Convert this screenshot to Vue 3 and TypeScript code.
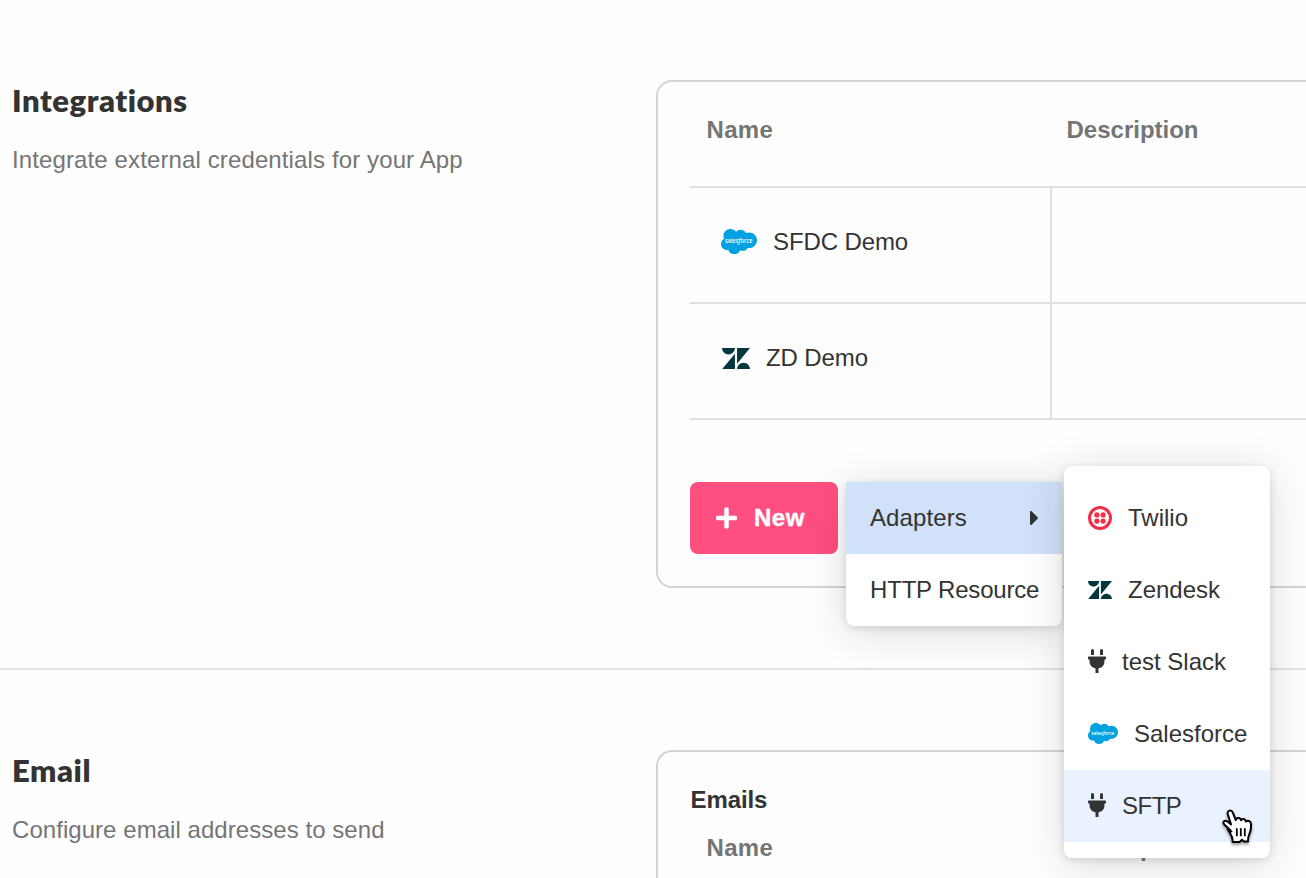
<script setup lang="ts">
type IconName = 'twilio' | 'zendesk' | 'plug' | 'salesforce'

interface Integration {
  name: string
  icon: IconName
  description: string
}

interface Adapter {
  label: string
  icon: IconName
  hovered?: boolean
}

const viewBoxes: Record<IconName, string> = {
  twilio: '0 0 24 24',
  zendesk: '0 2.9 24 18.2',
  plug: '0 0 384 512',
  salesforce: '0 3.6 24 16.8',
}

const shapes: Record<IconName, string> = {
  twilio:
    'M12 0a12 12 0 100 24 12 12 0 000-24zm0 3.1a8.9 8.9 0 110 17.8 8.9 8.9 0 010-17.8zM8.9 6.3a2.6 2.6 0 100 5.2 2.6 2.6 0 000-5.2zm6.2 0a2.6 2.6 0 100 5.2 2.6 2.6 0 000-5.2zm-6.2 6.2a2.6 2.6 0 100 5.2 2.6 2.6 0 000-5.2zm6.2 0a2.6 2.6 0 100 5.2 2.6 2.6 0 000-5.2z',
  zendesk:
    'M12.914 2.904V16.29L24 2.905H12.914zM0 2.906C0 5.966 2.483 8.45 5.543 8.45s5.542-2.484 5.543-5.544H0zm11.086 4.807L0 21.096h11.086V7.713zm7.37 7.84c-3.063 0-5.542 2.48-5.542 5.543H24c0-3.06-2.48-5.543-5.543-5.543z',
  plug: 'M320,32a32,32,0,0,0-64,0v96h64Zm48,128H16A16,16,0,0,0,0,176v32a16,16,0,0,0,16,16H32v32A160.07,160.07,0,0,0,160,412.8V512h64V412.8A160.07,160.07,0,0,0,352,256V224h16a16,16,0,0,0,16-16V176A16,16,0,0,0,368,160ZM128,32a32,32,0,0,0-64,0v96h64Z',
  salesforce:
    'M10.006 5.415a4.195 4.195 0 013.045-1.306c1.56 0 2.954.9 3.69 2.205.63-.3 1.35-.45 2.1-.45 2.85 0 5.159 2.34 5.159 5.22s-2.31 5.22-5.176 5.22c-.345 0-.69-.044-1.02-.104a3.75 3.75 0 01-3.3 1.95c-.6 0-1.155-.15-1.65-.375A4.314 4.314 0 018.88 20.4a4.302 4.302 0 01-4.05-2.82c-.27.062-.54.076-.825.076-2.204 0-4.005-1.8-4.005-4.05 0-1.5.811-2.805 2.01-3.51-.255-.57-.39-1.2-.39-1.846 0-2.58 2.1-4.65 4.65-4.65 1.53 0 2.85.705 3.72 1.8',
}

const integrations: Integration[] = [
  { name: 'SFDC Demo', icon: 'salesforce', description: '' },
  { name: 'ZD Demo', icon: 'zendesk', description: '' },
]

const adapters: Adapter[] = [
  { label: 'Twilio', icon: 'twilio' },
  { label: 'Zendesk', icon: 'zendesk' },
  { label: 'test Slack', icon: 'plug' },
  { label: 'Salesforce', icon: 'salesforce' },
  { label: 'SFTP', icon: 'plug', hovered: true },
]
</script>

<template>
  <main class="page">
    <section class="section">
      <header class="intro">
        <h2>Integrations</h2>
        <p>Integrate external credentials for your App</p>
      </header>
      <div class="card">
        <div class="row head">
          <div class="cell">Name</div>
          <div class="cell">Description</div>
        </div>
        <div v-for="item in integrations" :key="item.name" class="row body">
          <div class="cell name">
            <svg :class="['icon', item.icon]" :viewBox="viewBoxes[item.icon]">
              <path :d="shapes[item.icon]" />
              <text v-if="item.icon === 'salesforce'" x="2.6" y="13.2" textLength="18.4" lengthAdjust="spacingAndGlyphs">sales<tspan font-style="italic">f</tspan>orce</text>
            </svg>
            <span>{{ item.name }}</span>
          </div>
          <div class="cell">{{ item.description }}</div>
        </div>
        <div class="actions">
          <button class="new" type="button">
            <svg class="plus" viewBox="0 0 448 512">
              <path
                fill="#fff"
                d="M416 208H272V64c0-17.67-14.33-32-32-32h-32c-17.67 0-32 14.33-32 32v144H32c-17.67 0-32 14.33-32 32v32c0 17.67 14.33 32 32 32h144v144c0 17.67 14.33 32 32 32h32c17.67 0 32-14.33 32-32V304h144c17.67 0 32-14.33 32-32v-32c0-17.67-14.33-32-32-32z"
              />
            </svg>
            <span>New</span>
          </button>
          <div class="menu">
            <div class="item active">
              <span>Adapters</span>
              <svg class="caret" viewBox="0 0 192 512">
                <path
                  fill="#333"
                  d="M0 384.662V127.338c0-17.818 21.543-26.741 34.142-14.142l128.656 128.656c7.81 7.81 7.81 20.474 0 28.284L34.142 398.804C21.543 411.404 0 402.48 0 384.662z"
                />
              </svg>
            </div>
            <div class="item resource">HTTP Resource</div>
            <div class="submenu">
              <div
                v-for="adapter in adapters"
                :key="adapter.label"
                :class="['item', { hovered: adapter.hovered }]"
              >
                <svg :class="['icon', adapter.icon]" :viewBox="viewBoxes[adapter.icon]">
                  <path :d="shapes[adapter.icon]" fill-rule="evenodd" />
                  <text v-if="adapter.icon === 'salesforce'" x="2.6" y="13.2" textLength="18.4" lengthAdjust="spacingAndGlyphs">sales<tspan font-style="italic">f</tspan>orce</text>
                </svg>
                <span>{{ adapter.label }}</span>
                <svg v-if="adapter.hovered" class="pointer" viewBox="0 0 34 38">
                  <path
                    fill="#fff"
                    stroke="#000"
                    stroke-width="2"
                    stroke-linejoin="round"
                    d="M11.8 24.2 C9.5 20.8 6.2 18.6 4.2 16.4 C2.2 13.8 4.6 11.7 7.3 13.3 L11 16.4 L7.8 6.2 C6.8 2.4 11.4 1 12.8 4.6 L15.8 12 C16.4 9.4 20.4 9.4 21 12.2 C22 10.2 25.4 10.6 25.8 13.4 C27.6 11.8 30.8 13 31 16 C31.2 20 30.8 23.6 29.2 26.4 C28.2 28.4 28 29.6 28 33.6 L24 33.6 L22 31.8 L19.6 34 L12.6 34 C12.8 30.8 12.4 28.4 10.2 25.6 L7 20"
                  />
                  <path stroke="#000" stroke-width="1.8" d="M16.8 20.2v8M20.8 20.2v8M24.8 20.2v8" />
                </svg>
              </div>
            </div>
          </div>
        </div>
      </div>
    </section>

    <section class="section">
      <header class="intro">
        <h2>Email</h2>
        <p class="tight">Configure email addresses to send</p>
      </header>
      <div class="card">
        <h3>Emails</h3>
        <div class="row head">
          <div class="cell">Name</div>
          <div class="cell">Description</div>
        </div>
      </div>
    </section>
  </main>
</template>

<style>
html,
body {
  overflow: hidden;
  background: #fefefe;
}
</style>

<style scoped>
.page {
  box-sizing: border-box;
  width: 1306px;
  height: 878px;
  overflow: hidden;
  font: 24px/36px 'Liberation Sans', Arial, sans-serif;
  color: #333;
}
.section {
  display: grid;
  grid-template-columns: 644px 900px;
  padding: 80px 0 80px 12px;
  border-bottom: 2px solid #e2e2e2;
}
h2 {
  margin: -2px 0 0;
  font: 800 31px/44px Lato, sans-serif;
  letter-spacing: 0.55px;
}
.intro p {
  margin: 20px 0 0;
  color: #757575;
  letter-spacing: 0.12px;
}
.intro p.tight {
  letter-spacing: 0.05px;
}
.card {
  box-sizing: border-box;
  padding: 32px;
  border: 2px solid #d3d3d3;
  border-radius: 16px;
}
h3 {
  margin: -2px 0 0;
  font-size: 24px;
  line-height: 36px;
  letter-spacing: -0.1px;
  text-indent: 0.5px;
}
.row {
  display: grid;
  grid-template-columns: 362px 1fr;
  border-bottom: 2px solid #e0e0e0;
}
.head {
  height: 72px;
  font-weight: bold;
  color: #757575;
}
.head .cell {
  padding: 0 16.5px;
  margin-top: -2px;
  letter-spacing: 0.3px;
}
.head .cell + .cell {
  padding-left: 14.5px;
  letter-spacing: 0;
}
h3 + .head {
  margin-top: 14px;
}
.body {
  height: 114px;
}
.body .cell:first-child {
  border-right: 2px solid #e0e0e0;
}
.name {
  display: flex;
  align-items: center;
  gap: 16px;
  padding: 0 32px 6px;
}
.body .name span {
  letter-spacing: -0.1px;
}
.icon {
  flex: none;
  width: 24px;
  height: 24px;
}
.icon text {
  font: 600 4.1px 'Open Sans', sans-serif;
  fill: #fff;
}
.icon.twilio {
  fill: #f22f46;
}
.icon.zendesk {
  height: 18.2px;
  fill: #03363d;
}
.icon.plug {
  width: 18px;
  margin-top: -2px;
  fill: #333;
}
.icon.salesforce {
  width: 30px;
  height: 21px;
  margin-top: -2px;
  fill: #00a1e0;
}
.name .icon.zendesk {
  width: 28px;
  height: 21.3px;
  margin-top: 1px;
}
.name .icon.salesforce {
  width: 36px;
  height: 25.2px;
  margin: -1px 0 0 -1px;
}
.actions {
  display: flex;
  gap: 8px;
  height: 72px;
  padding-top: 62px;
}
.new {
  display: flex;
  align-items: center;
  gap: 17px;
  box-sizing: border-box;
  width: 148px;
  height: 72px;
  padding: 0 0 0 26px;
  border: 0;
  border-radius: 8px;
  background: #ff4f81;
  color: #fff;
  font: bold 24px/36px 'Liberation Sans', Arial, sans-serif;
  letter-spacing: 0.5px;
}
.new span {
  -webkit-text-stroke: 0.4px #fff;
}
.plus {
  width: 21px;
  height: 24px;
  margin-top: -1px;
}
.menu,
.submenu {
  background: #fff;
  box-shadow: 0 2px 8px rgba(0, 0, 0, 0.12), 0 6px 44px rgba(0, 0, 0, 0.14);
}
.menu {
  position: relative;
  z-index: 1;
  width: 216px;
  height: 144px;
  border-radius: 0 0 8px 8px;
}
.submenu {
  position: absolute;
  top: -16px;
  left: 218px;
  width: 206px;
  padding: 16px 0;
  border-radius: 8px;
}
.item {
  position: relative;
  display: flex;
  align-items: center;
  gap: 16px;
  box-sizing: border-box;
  height: 72px;
  padding: 0 24px;
  white-space: nowrap;
}
.item.active {
  justify-content: space-between;
  padding-right: 23px;
  background: #d0e1f9;
  letter-spacing: 0.1px;
}
.item.resource {
  letter-spacing: -0.18px;
}
.item.hovered {
  background: #eaf2ff;
  letter-spacing: -0.5px;
}
.caret {
  width: 9px;
  height: 24px;
  margin-top: -1px;
}
.pointer {
  position: absolute;
  top: 38px;
  left: 156px;
  width: 34px;
  height: 38px;
  filter: drop-shadow(0 2px 1.5px rgba(0, 0, 0, 0.4));
}
</style>
